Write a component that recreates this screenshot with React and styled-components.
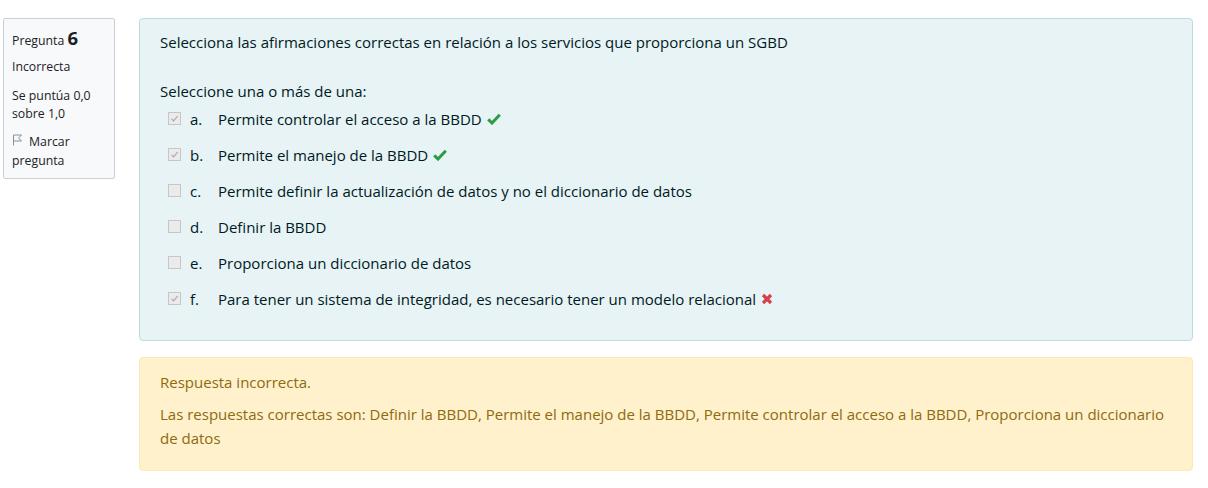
import React from "react";
import styled, { createGlobalStyle } from "styled-components";

const Global = createGlobalStyle`
  html, body { margin: 0; padding: 0; background: #fff; }
  body {
    font-family: "Open Sans", "Noto Sans", sans-serif;
    font-size: 15px;
    line-height: 1.5;
    color: #1d2125;
  }
`;

const Page = styled.div`
  display: flex;
  align-items: flex-start;
  gap: 24px;
  padding: 18px 15px 0 3px;
`;

const Info = styled.aside`
  flex: 0 0 auto;
  width: 95px;
  box-sizing: content-box;
  padding: 7px 7px 8px 8px;
  background: #f8f9fa;
  border: 1px solid #cad0d7;
  border-radius: 2px;
  font-size: 12.3px;
  line-height: 18.5px;
  color: #1d2125;
`;

const Heading = styled.h3`
  margin: 0 0 5px;
  font-size: 12.3px;
  font-weight: 400;
  line-height: 24px;
`;

const QNo = styled.span`
  font-size: 18.5px;
  font-weight: 700;
`;

const InfoBlock = styled.div`
  margin-bottom: ${(p) => (p.$tight ? 8 : 10)}px;
  &:last-child { margin-bottom: 0; }
`;

const Flag = styled.div`
  color: #1d2125;
  line-height: 19px;
`;

const Main = styled.div`
  flex: 1 1 auto;
  display: flex;
  flex-direction: column;
  gap: 16px;
`;

const Formulation = styled.div`
  background: #e7f3f5;
  border: 1px solid #b8dce2;
  border-radius: 4px;
  color: #001a1e;
  padding: 12px 20px 23px;
`;

const QText = styled.p`
  margin: 0 0 26px;
`;

const Prompt = styled.div`
  margin-bottom: -1px;
`;

const Answers = styled.div`
  display: flex;
  flex-direction: column;
`;

const Option = styled.div`
  display: flex;
  align-items: center;
  height: 36px;
  padding-left: 8px;
`;

const Box = styled.span`
  display: inline-flex;
  align-items: center;
  justify-content: center;
  box-sizing: border-box;
  width: 13px;
  height: 13px;
  border: 1px solid #c6c6c6;
  background: #ebebeb;
  margin-right: 9px;
  position: relative;
  top: -1px;
`;

const Letter = styled.span`
  display: inline-block;
  width: 28px;
`;

const Mark = styled.svg`
  margin-left: 5px;
`;

const Outcome = styled.div`
  background: #fef1cb;
  border: 1px solid #fde9b6;
  border-radius: 4px;
  color: #8e6a10;
  padding: 13px 20px 20px;
`;

const Feedback = styled.div`
  margin-bottom: 8px;
`;

const RightAnswer = styled.div`
  line-height: 24px;
`;

const FlagSvg = styled.svg`
  margin-right: 6px;
`;

function Check() {
  return (
    <svg width="9" height="9" viewBox="0 0 9 9">
      <path d="M1.5 4.8 L3.6 6.9 L7.7 2" fill="none" stroke="#a6a6a6" strokeWidth="1.1" />
    </svg>
  );
}

function Tick() {
  return (
    <Mark width="14" height="12" viewBox="0 0 14 12">
      <path d="M1.2 6.4 L5 10 L12.8 1.8" fill="none" stroke="#2a9c45" strokeWidth="3" strokeLinejoin="miter" />
    </Mark>
  );
}

function Cross() {
  return (
    <Mark width="12" height="12" viewBox="0 0 12 12">
      <path d="M2 2 L10 10 M10 2 L2 10" fill="none" stroke="#d5404b" strokeWidth="3.2" />
    </Mark>
  );
}

function FlagIcon() {
  return (
    <FlagSvg width="11" height="12" viewBox="0 0 11 12">
      <path d="M1.5 11.5 V1 H9.5 L6.5 4 L9.5 7 H1.5" fill="none" stroke="#8a8f94" strokeWidth="1" />
    </FlagSvg>
  );
}

const options = [
  { l: "a.", t: "Permite controlar el acceso a la BBDD", c: true, m: "ok" },
  { l: "b.", t: "Permite el manejo de la BBDD", c: true, m: "ok" },
  { l: "c.", t: "Permite definir la actualización de datos y no el diccionario de datos" },
  { l: "d.", t: "Definir la BBDD" },
  { l: "e.", t: "Proporciona un diccionario de datos" },
  { l: "f.", t: "Para tener un sistema de integridad, es necesario tener un modelo relacional", c: true, m: "bad" },
];

export default function App() {
  return (
    <>
      <Global />
      <Page>
        <Info>
          <Heading>Pregunta <QNo>6</QNo></Heading>
          <InfoBlock>Incorrecta</InfoBlock>
          <InfoBlock $tight>Se puntúa 0,0 sobre 1,0</InfoBlock>
          <InfoBlock>
            <Flag><FlagIcon />Marcar pregunta</Flag>
          </InfoBlock>
        </Info>
        <Main>
          <Formulation>
            <QText>Selecciona las afirmaciones correctas en relación a los servicios que proporciona un SGBD</QText>
            <Prompt>Seleccione una o más de una:</Prompt>
            <Answers>
              {options.map((o) => (
                <Option key={o.l}>
                  <Box>{o.c && <Check />}</Box>
                  <Letter>{o.l}</Letter>
                  <span>{o.t}</span>
                  {o.m === "ok" && <Tick />}
                  {o.m === "bad" && <Cross />}
                </Option>
              ))}
            </Answers>
          </Formulation>
          <Outcome>
            <Feedback>Respuesta incorrecta.</Feedback>
            <RightAnswer>
              Las respuestas correctas son: Definir la BBDD, Permite el manejo de la BBDD, Permite controlar el acceso a la BBDD, Proporciona un diccionario de datos
            </RightAnswer>
          </Outcome>
        </Main>
      </Page>
    </>
  );
}
